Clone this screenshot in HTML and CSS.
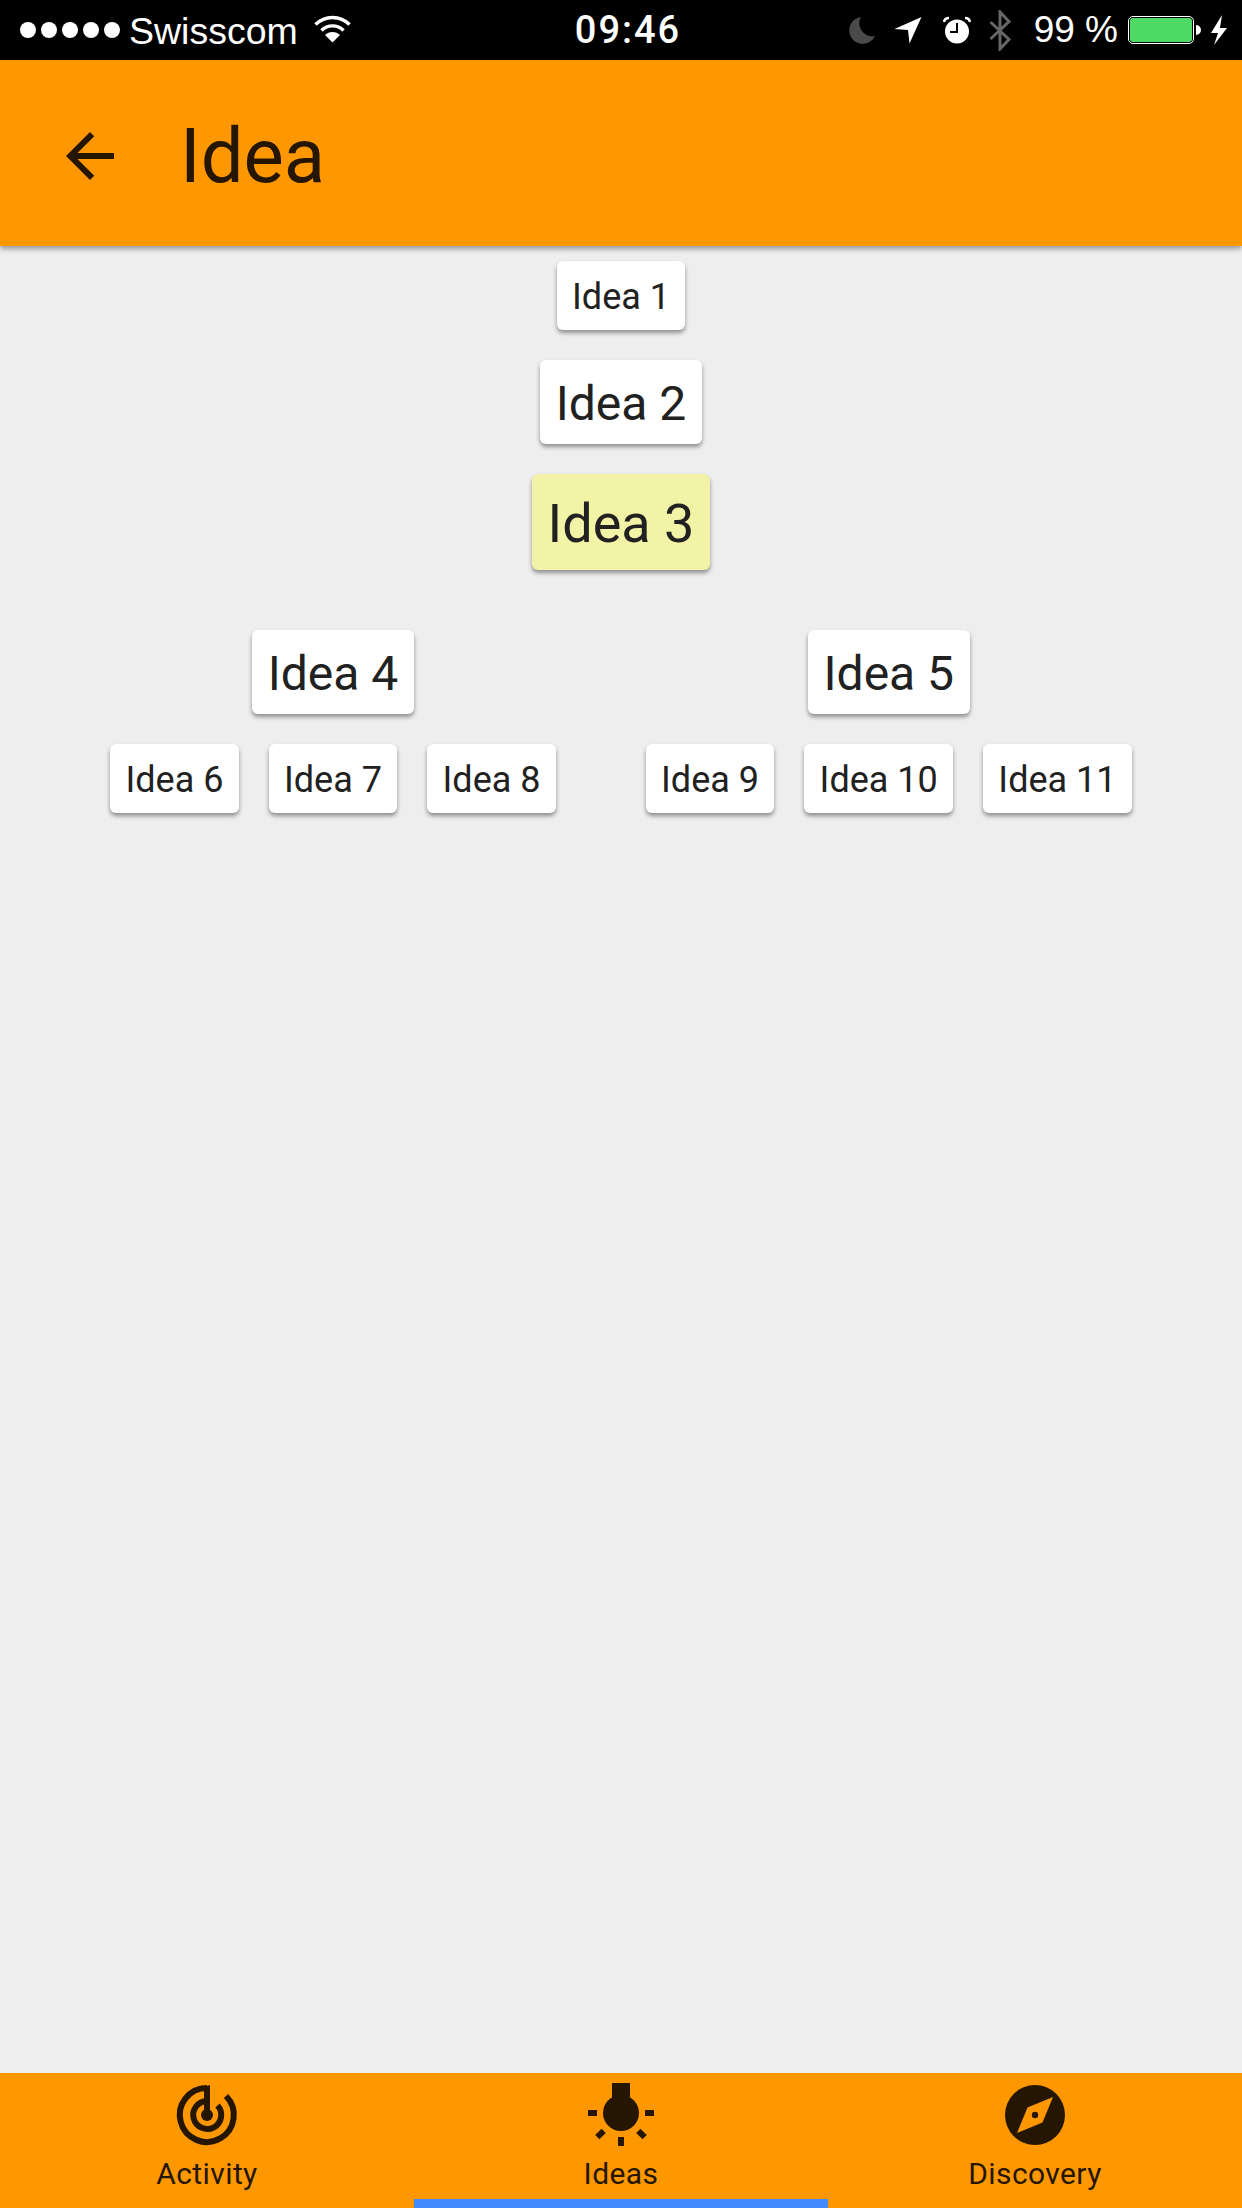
FILE: index.html
```html
<!DOCTYPE html>
<html lang="en">
<head>
    <meta charset="UTF-8">
    <meta name="viewport" content="width=device-width, initial-scale=1.0">
    <title>Idea</title>
    <link rel="stylesheet" href="styles.css">
</head>
<body>
    <div class="app">
        <!-- Status bar -->
        <div class="status-bar">
            <div class="status-left">
                <div class="signal"><i></i><i></i><i></i><i></i><i></i></div>
                <span class="carrier">Swisscom</span>
                <svg class="wifi" width="37" height="28" viewBox="0 0 37 28">
                    <path d="M1.500 9.500a24 24 0 0 1 34 0" fill="none" stroke="#fff" stroke-width="3.400"/>
                    <path d="M7.500 15.500a15.500 15.500 0 0 1 22 0" fill="none" stroke="#fff" stroke-width="3.400"/>
                    <path d="M18.500 27.500l-7.500-7.500a10.600 10.600 0 0 1 15 0z" fill="#fff"/>
                </svg>
            </div>
            <div class="clock">09:46</div>
            <div class="status-right">
                <svg class="moon" width="28" height="28" viewBox="0 0 28 28">
                    <path d="M13 1A13.500 13.500 0 1 0 27 20A13 13 0 0 1 13 1z" fill="#4a4a4a"/>
                </svg>
                <svg class="location" width="28" height="28" viewBox="0 0 28 28">
                    <path d="M27.500 1L0.500 13L14 14L15.500 27.500z" fill="#fff"/>
                </svg>
                <svg class="alarm" width="28" height="28" viewBox="0 0 28 28">
                    <circle cx="14" cy="15.500" r="12" fill="#fff"/>
                    <path d="M14 7v9H7" fill="none" stroke="#000" stroke-width="2"/>
                    <path d="M1 6a5 5 0 0 1 5-4M27 6a5 5 0 0 0-5-4" fill="none" stroke="#fff" stroke-width="2.500"/>
                </svg>
                <svg class="bluetooth" width="22" height="41" viewBox="0 0 22 41">
                    <path d="M1.500 12L20 29.500L11 39V2L20 11.500L1.500 29" fill="none" stroke="#666" stroke-width="3"/>
                </svg>
                <span class="percent">99 %</span>
                <div class="battery"><div class="battery-level"></div></div>
                <div class="battery-nub"></div>
                <svg class="bolt" width="18" height="30" viewBox="0 0 18 30">
                    <path d="M12 0L1 18H8L4 30L17 13H10z" fill="#fff"/>
                </svg>
            </div>
        </div>

        <!-- Header -->
        <div class="app-header">
            <svg class="back-icon" width="72" height="72" viewBox="0 0 24 24">
                <path d="M20 11H7.830l5.590-5.590L12 4l-8 8 8 8 1.410-1.410L7.830 13H20v-2z"/>
            </svg>
            <div class="app-title">Idea</div>
        </div>

        <!-- Idea tree -->
        <div class="tree">
            <div class="card card-sm">Idea 1</div>
            <div class="card card-md">Idea 2</div>
            <div class="card card-lg card-active">Idea 3</div>
            <div class="branches">
                <div class="branch">
                    <div class="card card-md">Idea 4</div>
                    <div class="leaves">
                        <div class="card card-sm">Idea 6</div>
                        <div class="card card-sm">Idea 7</div>
                        <div class="card card-sm">Idea 8</div>
                    </div>
                </div>
                <div class="branch">
                    <div class="card card-md">Idea 5</div>
                    <div class="leaves">
                        <div class="card card-sm">Idea 9</div>
                        <div class="card card-sm">Idea 10</div>
                        <div class="card card-sm">Idea 11</div>
                    </div>
                </div>
            </div>
        </div>

        <!-- Bottom tabs -->
        <div class="tabs">
            <div class="tab">
                <svg class="tab-icon" width="72" height="72" viewBox="0 0 72 72">
                    <path d="M36 9A27 27 0 1 0 55 17" fill="none" stroke="#241600" stroke-width="6"/>
                    <path d="M36 22A14 14 0 1 0 46.500 26.500" fill="none" stroke="#241600" stroke-width="6"/>
                    <path d="M39 6V36H33V8z" fill="#241600"/>
                    <circle cx="36" cy="36" r="6" fill="#241600"/>
                </svg>
                <span class="tab-label">Activity</span>
            </div>
            <div class="tab tab-active">
                <svg class="tab-icon" width="72" height="72" viewBox="0 0 72 72">
                    <rect x="27" y="4" width="18" height="16" fill="#241600"/>
                    <circle cx="36" cy="34" r="18" fill="#241600"/>
                    <rect x="3" y="31" width="9" height="6" fill="#241600"/>
                    <rect x="60" y="31" width="9" height="6" fill="#241600"/>
                    <rect x="33" y="58" width="6" height="9" fill="#241600"/>
                    <rect x="11" y="52" width="9" height="6" fill="#241600" transform="rotate(-45 15.500 55)"/>
                    <rect x="52" y="52" width="9" height="6" fill="#241600" transform="rotate(45 56.500 55)"/>
                </svg>
                <span class="tab-label">Ideas</span>
            </div>
            <div class="tab">
                <svg class="tab-icon" width="72" height="72" viewBox="0 0 72 72">
                    <circle cx="36" cy="36" r="30" fill="#241600"/>
                    <path d="M54 18L43.500 43.500L18 54L28.500 28.500z" fill="#ff9800"/>
                    <circle cx="36" cy="36" r="3.200" fill="#241600"/>
                </svg>
                <span class="tab-label">Discovery</span>
            </div>
        </div>
    </div>
</body>
</html>
```

FILE: styles.css
```css
html, body {
    margin: 0;
    padding: 0;
}
body {
    background-color: #eeeeee;
    font-family: Roboto, sans-serif;
}
.app {
    width: 1242px;
    height: 2208px;
    display: flex;
    flex-direction: column;
    overflow: hidden;
}

/* Status bar */
.status-bar {
    height: 60px;
    flex: none;
    background-color: #000;
    color: #fff;
    display: flex;
    align-items: center;
    justify-content: space-between;
    font-family: 'Liberation Sans', sans-serif;
    font-size: 37px;
    padding: 0 14px 0 20px;
}
.status-left, .status-right {
    width: 460px;
    display: flex;
    align-items: center;
}
.status-right {
    justify-content: flex-end;
}
.signal {
    display: flex;
    gap: 5px;
}
.signal i {
    width: 16px;
    height: 16px;
    border-radius: 50%;
    background-color: #fff;
}
.carrier {
    font-size: 37.500px;
    line-height: 44px;
    margin-left: 9px;
    padding-top: 2px;
}
.wifi {
    margin-left: 16px;
    margin-top: -3px;
}
.clock {
    font-family: Roboto, sans-serif;
    font-weight: 500;
    font-size: 38px;
    letter-spacing: 2px;
    margin-left: 8px;
}
.location {
    margin-left: 18px;
}
.alarm {
    margin-left: 21px;
}
.bluetooth {
    margin-left: 18px;
}
.percent {
    margin-left: 23px;
}
.battery {
    margin-left: 10px;
    width: 66px;
    height: 28px;
    box-sizing: border-box;
    border: 1px solid #fff;
    border-radius: 5px;
    padding: 1px;
}
.battery-level {
    height: 100%;
    background-color: #4cd964;
    border-radius: 3px;
}
.battery-nub {
    width: 5px;
    height: 10px;
    margin-left: 2px;
    background-color: #fff;
    border-radius: 0 5px 5px 0;
}
.bolt {
    margin-left: 9px;
}

/* Header */
.app-header {
    height: 186px;
    flex: none;
    background-color: #ff9800;
    color: #241600;
    display: flex;
    align-items: center;
    padding: 6px 0 0 54px;
    box-sizing: border-box;
    box-shadow: 0 3px 5px rgba(0, 0, 0, 0.35);
    position: relative;
}
.back-icon {
    fill: #241600;
}
.app-title {
    font-size: 76px;
    margin-left: 54px;
}

/* Idea tree */
.tree {
    flex: 1;
    padding-top: 15px;
    display: flex;
    flex-direction: column;
    align-items: center;
    gap: 30px;
}
.card {
    background-color: #fff;
    color: #212121;
    border-radius: 6px;
    box-shadow: 0 3px 4px rgba(0, 0, 0, 0.4);
    white-space: nowrap;
}
.card-sm {
    font-size: 36px;
    line-height: 42px;
    padding: 15px 15.300px 12px;
}
.card-md {
    font-size: 48px;
    line-height: 56px;
    padding: 16px 16px 12px;
}
.card-lg {
    font-size: 54px;
    line-height: 63px;
    padding: 18px 15.500px 15px;
}
.card-active {
    background-color: #f3f3a7;
}
.branches {
    display: flex;
    gap: 90px;
    margin-top: 30px;
}
.branch {
    display: flex;
    flex-direction: column;
    align-items: center;
    gap: 30px;
}
.leaves {
    display: flex;
    gap: 30px;
}

/* Bottom tabs */
.tabs {
    height: 135px;
    flex: none;
    background-color: #ff9800;
    display: flex;
}
.tab {
    flex: 1;
    display: flex;
    flex-direction: column;
    align-items: center;
    padding-top: 6px;
    box-sizing: border-box;
    color: #241600;
}
.tab-active {
    border-bottom: 9px solid #448aff;
}
.tab-icon {
    display: block;
}
.tab-label {
    font-size: 30px;
    line-height: 35px;
    letter-spacing: 0.400px;
    margin-top: 5px;
}
```
